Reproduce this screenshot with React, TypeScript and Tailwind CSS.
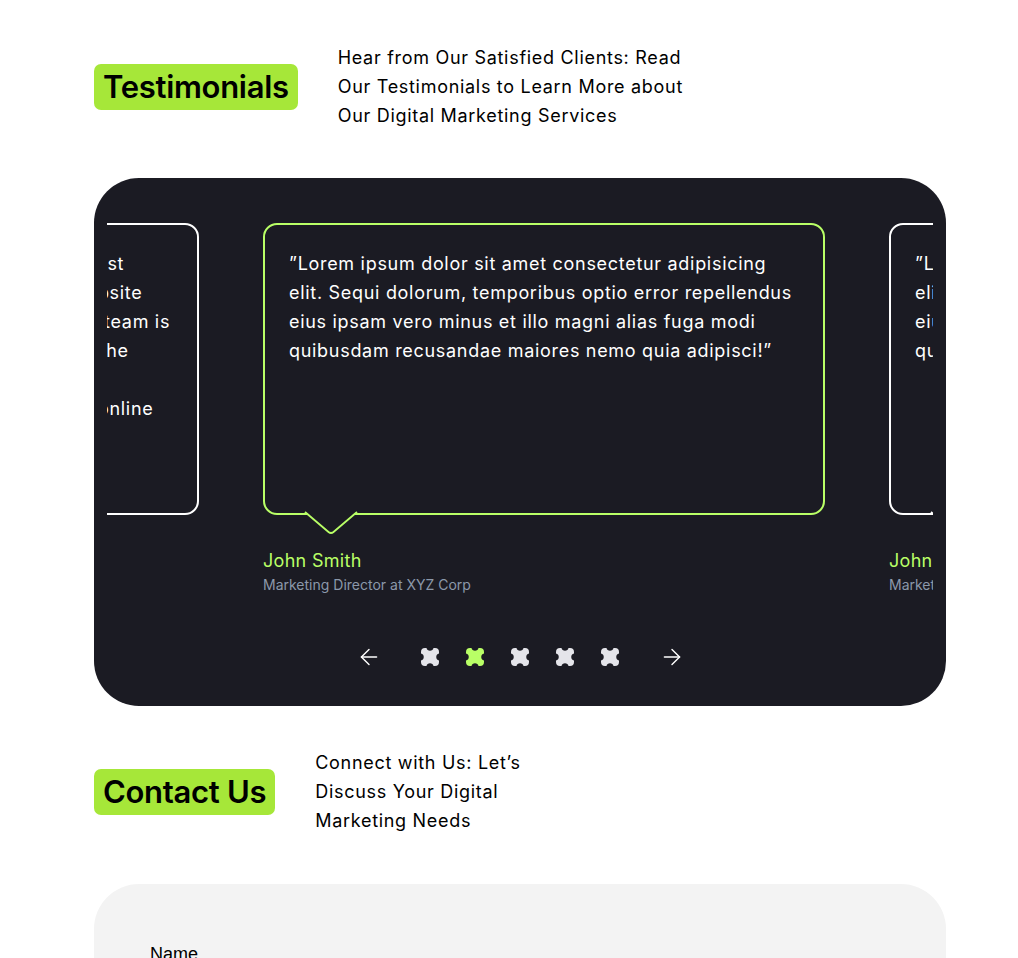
import { ArrowLeft, ArrowRight } from "lucide-react";

interface Testimonial {
  lines: string[];
  name: string;
  role: string;
}

const quote = [
  "”Lorem ipsum dolor sit amet consectetur adipisicing",
  "elit. Sequi dolorum, temporibus optio error repellendus",
  "eius ipsam vero minus et illo magni alias fuga modi",
  "quibusdam recusandae maiores nemo quia adipisci!”",
];

const slides: Testimonial[] = [
  {
    lines: [
      "”We have been working with Positivus for the past",
      "year and have seen a significant increase in website",
      "traffic and leads as a result of their efforts. The team is",
      "professional, responsive, and truly cares about the",
      "success of our business. We recommend",
      "Positivus to any company looking to grow their online",
      "presence.”",
    ],
    name: "John Smith",
    role: "Marketing Director at XYZ Corp",
  },
  { lines: quote, name: "John Smith", role: "Marketing Director at XYZ Corp" },
  { lines: quote, name: "John Smith", role: "Marketing Director at XYZ Corp" },
];

const font = { fontFamily: "'Inter', 'Liberation Sans', sans-serif" };

function Star({ active }: { active?: boolean }) {
  return (
    <svg width="18" height="18" viewBox="0 0 18 18">
      <path
        d="M4 0 H5.5 A3.6 3.6 0 0 0 12.5 0 H14 A4 4 0 0 1 18 4 V5.5 A3.6 3.6 0 0 0 18 12.5 V14 A4 4 0 0 1 14 18 H12.5 A3.6 3.6 0 0 0 5.5 18 H4 A4 4 0 0 1 0 14 V12.5 A3.6 3.6 0 0 0 0 5.5 V4 A4 4 0 0 1 4 0 Z"
        fill={active ? "#B9FF66" : "#E5E5EA"}
      />
    </svg>
  );
}

function Slide({ item, active }: { item: Testimonial; active?: boolean }) {
  const stroke = active ? "#B9FF66" : "#FFFFFF";
  return (
    <div className="w-[562px] shrink-0">
      <div
        className={`relative h-[292px] rounded-[14px] border-2 px-[24px] pt-[24px] ${active ? "border-[#B9FF66]" : "border-white"}`}
      >
        <p className="whitespace-nowrap text-[18px] leading-[29px] tracking-[0.7px] text-white">
          {item.lines.map((l, i) => (
            <span key={i} className="block">
              {l}
            </span>
          ))}
        </p>
        <svg
          className="absolute left-[40px] top-full -mt-[2px] overflow-visible"
          width="52"
          height="24"
          viewBox="0 0 52 24"
        >
          <path d="M0 0 L26 23 L52 0 Z" fill="#1B1B23" />
          <rect x="1" y="-1" width="50" height="3" fill="#1B1B23" />
          <path d="M0 1 L23.5 21 Q26 23 28.5 21 L52 1" fill="none" stroke={stroke} strokeWidth="1.8" />
        </svg>
      </div>
      <p className="mt-[34px] text-[18px] leading-6 tracking-[0.3px] text-[#B9FF66]">{item.name}</p>
      <p className="mt-[2px] text-[14px] leading-5 text-[#8B98AA]">{item.role}</p>
    </div>
  );
}

function SectionHead({ title, lines }: { title: string; lines: string[] }) {
  return (
    <div className="flex items-center gap-10">
      <h2 className="rounded-[7px] bg-[#A6E739] px-[9px] text-[31px] font-semibold leading-[46px] tracking-[-0.3px] text-black">
        {title}
      </h2>
      <p className="text-[18px] leading-[29px] tracking-[0.7px] text-black">
        {lines.map((l, i) => (
          <span key={i} className="block">
            {l}
          </span>
        ))}
      </p>
    </div>
  );
}

export default function App() {
  return (
    <div className="min-h-screen bg-white" style={font}>
      <div className="ml-[94px] w-[852px] pt-[43px]">
        <SectionHead
          title="Testimonials"
          lines={[
            "Hear from Our Satisfied Clients: Read",
            "Our Testimonials to Learn More about",
            "Our Digital Marketing Services",
          ]}
        />

        <section className="mt-[48px] rounded-[45px] bg-[#1B1B23] px-[13px] pb-[36px] pt-[45px]">
          <div className="overflow-hidden">
            <div className="flex gap-16 -translate-x-[470px]">
              {slides.map((s, i) => (
                <Slide key={i} item={s} active={i === 1} />
              ))}
            </div>
          </div>
          <div className="mt-[49px] flex items-center justify-center">
            <ArrowLeft size={26} strokeWidth={1.3} className="mr-[39px] text-white" />
            <div className="flex items-center gap-[27px]">
              {[0, 1, 2, 3, 4].map((i) => (
                <Star key={i} active={i === 1} />
              ))}
            </div>
            <ArrowRight size={26} strokeWidth={1.3} className="ml-[40px] text-white" />
          </div>
        </section>

        <div className="mt-[42px]">
          <SectionHead
            title="Contact Us"
            lines={["Connect with Us: Let’s", "Discuss Your Digital", "Marketing Needs"]}
          />
        </div>

        <section className="mt-[49px] h-[200px] rounded-[45px] bg-[#F3F3F3] px-[56px] pt-[57px]">
          <label className="block text-[18px] text-black" style={{ fontFamily: "'Liberation Sans', sans-serif" }}>
            Name
          </label>
        </section>
      </div>
    </div>
  );
}
